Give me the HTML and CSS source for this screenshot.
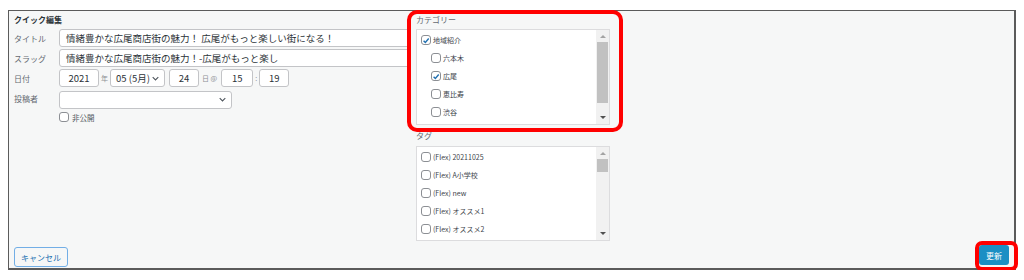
FILE: index.html
```html
<!DOCTYPE html>
<html lang="ja">
<head>
<meta charset="utf-8">
<title>クイック編集</title>
<link rel="stylesheet" href="styles.css">
</head>
<body>
<div class="frame">
  <div class="cols">
    <div class="left">
      <div class="heading">クイック編集</div>
      <div class="row"><span class="lbl">タイトル</span><div class="field wide">情緒豊かな広尾商店街の魅力！ 広尾がもっと楽しい街になる！</div></div>
      <div class="row"><span class="lbl">スラッグ</span><div class="field wide">情緒豊かな広尾商店街の魅力！-広尾がもっと楽し</div></div>
      <div class="row"><span class="lbl">日付</span>
        <div class="field num yr">2021</div><span class="sep nen">年</span>
        <div class="field sel mon">05 (5月)<svg class="chev" viewBox="0 0 10 6"><path d="M1 1l4 4 4-4" fill="none" stroke="#50575e" stroke-width="1.6"/></svg></div>
        <div class="field num day">24</div><span class="sep at">日 @</span>
        <div class="field num hr">15</div><span class="sep colon">:</span>
        <div class="field num mn">19</div>
      </div>
      <div class="row"><span class="lbl">投稿者</span><div class="field sel author"><span></span><svg class="chev" viewBox="0 0 10 6"><path d="M1 1l4 4 4-4" fill="none" stroke="#50575e" stroke-width="1.6"/></svg></div></div>
      <div class="row priv"><span class="lbl"></span><span class="cb"></span><span class="cbtext">非公開</span></div>
    </div>
    <div class="right">
      <div class="sec">カテゴリー</div>
      <div class="listbox cat">
        <ul class="items">
          <li><span class="cb on"><svg viewBox="0 0 10 10"><path d="M2 5.2l2.2 2.2L8.4 2.6" fill="none" stroke="#2271b1" stroke-width="1.8"/></svg></span>地域紹介</li>
          <li class="child"><span class="cb"></span>六本木</li>
          <li class="child"><span class="cb on"><svg viewBox="0 0 10 10"><path d="M2 5.2l2.2 2.2L8.4 2.6" fill="none" stroke="#2271b1" stroke-width="1.8"/></svg></span>広尾</li>
          <li class="child"><span class="cb"></span>恵比寿</li>
          <li class="child"><span class="cb"></span>渋谷</li>
        </ul>
        <div class="sbar"><span class="arr up"></span><div class="track"><div class="thumb big"></div></div><span class="arr down"></span></div>
      </div>
      <div class="sec tag">タグ</div>
      <div class="listbox tags">
        <ul class="items">
          <li><span class="cb"></span>(Flex) 20211025</li>
          <li><span class="cb"></span>(Flex) A小学校</li>
          <li><span class="cb"></span>(Flex) new</li>
          <li><span class="cb"></span>(Flex) オススメ1</li>
          <li><span class="cb"></span>(Flex) オススメ2</li>
        </ul>
        <div class="sbar"><span class="arr up"></span><div class="track"><div class="thumb small"></div></div><span class="arr down"></span></div>
      </div>
    </div>
  </div>
  <div class="footer">
    <span class="btn cancel">キャンセル</span>
    <span class="btn update">更新</span>
  </div>
  <div class="mark mark-cat"></div>
  <div class="mark mark-upd"></div>
</div>
</body>
</html>
```
FILE: styles.css
```css
* { box-sizing: border-box; }
html, body { margin: 0; padding: 0; background: #fff; }
body {
  font-family: "Noto Sans CJK JP", "Noto Sans", sans-serif;
  color: #50575e;
}
.frame {
  position: relative;
  margin: 10px 0 0 8px;
  width: 1008px;
  height: 260px;
  border: 1px solid #5b5b5b;
  border-width: 1px 2px 2px 1px;
  background: #f6f7f7;
  padding: 0 5px 1px 5px;
  display: flex;
  flex-direction: column;
}
.cols { display: flex; gap: 6px; }
.left { width: 396px; }
.heading {
  font-size: 8px;
  font-weight: bold;
  color: #2c3338;
  height: 18px;
  line-height: 16px;
  padding-top: 1px;
}
.row { display: flex; align-items: center; height: 18px; margin-bottom: 2px; }
.row.priv { margin-top: 1px; height: 16px; }
.lbl { width: 45px; flex: none; font-size: 8px; color: #646970; }
.field {
  height: 18px;
  background: #fff;
  border: 1px solid #c3c4c7;
  border-radius: 3px;
  font-size: 9.5px;
  line-height: 16px;
  color: #2c3338;
  padding: 0 6px;
  white-space: nowrap;
  overflow: hidden;
}
.field.wide { width: 351px; }
.field.num { text-align: center; }
.yr { width: 40px; }
.mon { width: 55px; margin-right: 4px; }
.day { width: 30px; }
.hr { width: 32px; }
.mn { width: 30px; }
.sel { display: flex; align-items: center; justify-content: space-between; padding: 0 5px; }
.author { width: 173px; margin-top: 3px; }
.chev { width: 7px; height: 5px; }
.sep { font-size: 7px; color: #8c8f94; }
.nen { margin: 0 2px 0 2px; }
.at { margin: 0 4px 0 3px; }
.colon { margin: 0 2px; }
.cb {
  display: inline-flex;
  align-items: center;
  justify-content: center;
  width: 10px;
  height: 10px;
  border: 1px solid #8c8f94;
  border-radius: 3px;
  background: #fff;
  flex: none;
}
.cb svg { width: 9px; height: 9px; }
.cbtext { font-size: 7.5px; margin-left: 3px; color: #50575e; }
.right { width: 194px; }
.sec { font-size: 8px; color: #646970; height: 18px; line-height: 18px; }
.sec.tag { height: 21px; line-height: 22px; }
.listbox {
  display: flex;
  background: #fff;
  border: 1px solid #dcdcde;
  height: 96px;
}
.listbox.tags { height: 95px; }
.items { list-style: none; margin: 0; padding: 1px 0 0 4px; flex: 1; }
.items li {
  display: flex;
  align-items: center;
  height: 18px;
  font-size: 7px;
  color: #3c434a;
}
.items li .cb { margin-right: 2px; }
.items li.child { padding-left: 10px; }
.sbar {
  width: 13px;
  background: #f1f1f1;
  display: flex;
  flex-direction: column;
  align-items: center;
}
.arr { width: 0; height: 0; border-left: 3px solid transparent; border-right: 3px solid transparent; margin: 5px 0 4px; }
.arr.up { border-bottom: 3px solid #a3a3a3; }
.arr.down { border-top: 3px solid #505050; margin: 4px 0 5px; }
.track { flex: 1; width: 100%; padding: 0 1px; }
.thumb { background: #c1c1c1; width: 100%; }
.thumb.big { height: 61px; }
.thumb.small { height: 13px; }
.footer { margin-top: auto; display: flex; justify-content: space-between; align-items: flex-end; }
.btn { font-size: 8px; border-radius: 3px; display: inline-flex; align-items: center; justify-content: center; }
.cancel {
  width: 54px; height: 20px;
  border: 1px solid #72aee6;
  color: #2271b1;
  background: #f6f7f7;
}
.update {
  width: 30px; height: 20px;
  background: #1b8fc4;
  color: #fff;
  margin-bottom: 2px;
}
.mark { position: absolute; border: 4px solid #f00; border-radius: 10px; }
.mark-cat { left: 398px; top: -1px; width: 216px; height: 122px; }
.mark-upd { left: 966px; top: 230px; width: 43px; height: 30px; border-radius: 7px; }
```
